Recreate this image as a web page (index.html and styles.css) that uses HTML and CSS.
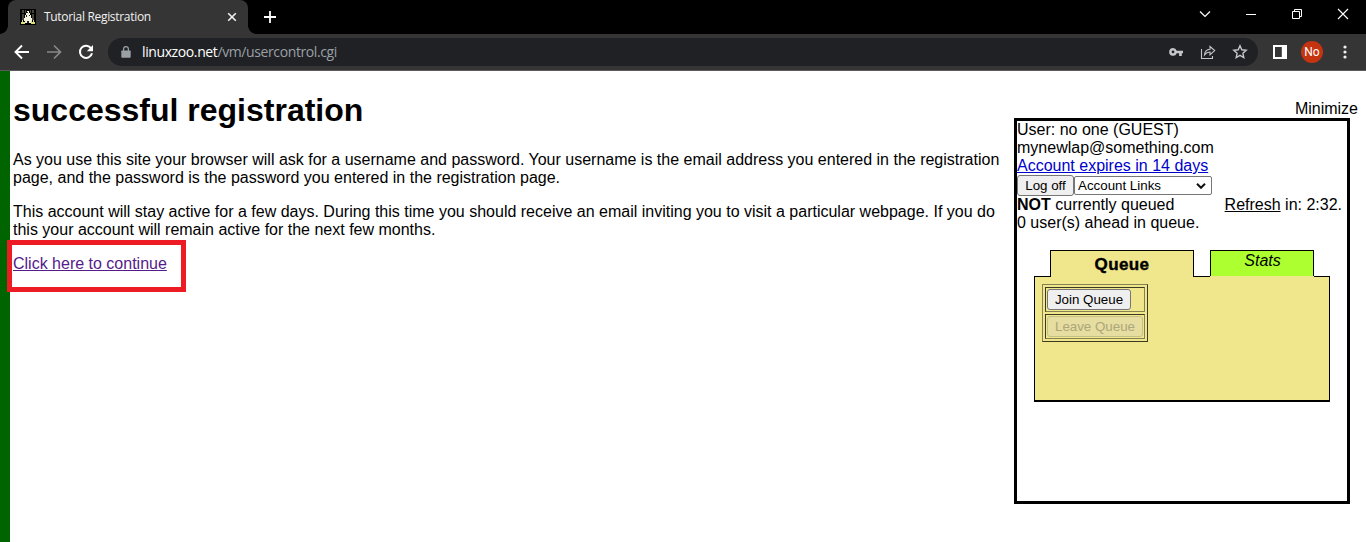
FILE: index.html
```html
<!DOCTYPE html>
<html lang="en">
<head>
<meta charset="utf-8">
<title>Tutorial Registration</title>
<link rel="stylesheet" href="styles.css">
</head>
<body>
<header class="browser">
  <div class="titlebar">
    <div class="tab">
      <svg class="favicon" width="16" height="16" viewBox="0 0 16 16"><path fill="#000" d="M0 0h16v16H0z"/><path fill="#45453a" d="M2 1h2v3H2zM2 5h2v6H2zM5 1h1v3H5zM10 1h1v3h-1zM12 1h2v3h-2zM12 5h2v6h-2z"/><path fill="#f4f4e0" d="M7 2h2v2h1v2h1v3h1v3h-1v2H5v-2H4V9h1V6h1V4h1z"/><path fill="#222" d="M7 3h1v1H7zM6 6h1v2H6zM9 6h1v1H9zM7 12h2v2H7z"/><path fill="#dede7a" d="M2 11h1v2h2v2H1v-2h1zM11 12h1v1h1v-2h1v2h1v2h-4zM8 4h1v1H8z"/></svg>
      <span class="tab-title">Tutorial Registration</span>
      <svg class="tab-close" width="10" height="10" viewBox="0 0 10 10"><path d="M1.2 1.2l7.6 7.6M8.800 1.2L1.2 8.800" stroke="#f1f1f1" stroke-width="1.6"/></svg>
    </div>
    <svg class="new-tab" width="12" height="12" viewBox="0 0 12 12"><path d="M6 0v12M0 6h12" stroke="#fff" stroke-width="1.8"/></svg>
    <div class="window-controls">
      <svg width="12" height="12" viewBox="0 0 12 12"><path d="M1 3.500l5 5 5-5" fill="none" stroke="#fff" stroke-width="1.200"/></svg>
      <svg width="12" height="12" viewBox="0 0 12 12"><path d="M1 6.500h10" stroke="#fff"/></svg>
      <svg width="12" height="12" viewBox="0 0 12 12"><path d="M1.500 3.500h7v7h-7zM3.500 3.500v-2h7v7h-2" fill="none" stroke="#fff"/></svg>
      <svg width="12" height="12" viewBox="0 0 12 12"><path d="M1 1l10 10M11 1L1 11" stroke="#fff" stroke-width="1.100"/></svg>
    </div>
  </div>
  <div class="toolbar">
    <nav class="nav">
      <svg width="16" height="16" viewBox="0 0 16 16"><path d="M15 8H2M8 1.500L1.500 8 8 14.500" fill="none" stroke="#fff" stroke-width="1.900"/></svg>
      <svg width="16" height="16" viewBox="0 0 16 16"><path d="M1 8h13M8 1.500L14.500 8 8 14.500" fill="none" stroke="#87888a" stroke-width="1.700"/></svg>
      <svg width="16" height="16" viewBox="0 0 16 16"><path d="M13.200 4.500A6.100 6.100 0 1 0 14 9.200" fill="none" stroke="#fff" stroke-width="2"/><path d="M15 1v6.200H8.800z" fill="#fff"/></svg>
    </nav>
    <div class="omnibox">
      <svg class="lock" width="10" height="12" viewBox="0 0 10 12"><path d="M1 4.500h8q.7 0 .7.700v5.600q0 .9-.9.900H1.200q-.9 0-.9-.9V5.200q0-.7.700-.7z" fill="#9aa0a6"/><path d="M2.600 5V3a2.400 2.400 0 0 1 4.800 0v2" fill="none" stroke="#9aa0a6" stroke-width="1.300"/></svg>
      <span class="url"><span class="host">linuxzoo.net</span>/vm/usercontrol.cgi</span>
      <div class="actions">
        <svg width="16" height="16" viewBox="0 0 16 16"><path fill="#c4c7c9" fill-rule="evenodd" d="M5 4a3.900 3.900 0 0 1 3.700 2.700H15v2.600h-1.200V12h-2.700V9.300H8.700A3.900 3.900 0 1 1 5 4zm0 2.500a1.400 1.400 0 1 0 0 2.800 1.400 1.400 0 0 0 0-2.800z"/></svg>
        <svg width="16" height="16" viewBox="0 0 16 16"><path d="M1.500 5v9.500h11V12M4.500 11c.3-3.500 2-5.500 5.500-5.700V2.500L14.700 6.600 10 10.700V8C7.500 7.900 6 9 4.500 11z" fill="none" stroke="#c4c7c9" stroke-width="1.100"/></svg>
        <svg width="16" height="16" viewBox="0 0 16 16"><path d="M8 1.800l1.800 4 4.400.5-3.300 3 .9 4.300L8 11.400l-3.800 2.200.9-4.300-3.300-3 4.400-.5z" fill="none" stroke="#c4c7c9" stroke-width="1.400"/></svg>
      </div>
    </div>
    <svg class="side-panel" width="14" height="14" viewBox="0 0 14 14"><path d="M0 0h14v14H0zM2 2v10h6.800V2z" fill="#fff" fill-rule="evenodd"/></svg>
    <span class="avatar">No</span>
    <svg class="more" width="4" height="14" viewBox="0 0 4 14"><g fill="#f1f1f1"><circle cx="2" cy="2" r="1.600"/><circle cx="2" cy="7" r="1.600"/><circle cx="2" cy="12" r="1.600"/></g></svg>
  </div>
</header>
<div class="page">
  <main class="content">
    <h1>successful registration</h1>
    <p>As you use this site your browser will ask for a username and password. Your username is the email address you entered in the registration page, and the password is the password you entered in the registration page.</p>
    <p>This account will stay active for a few days. During this time you should receive an email inviting you to visit a particular webpage. If you do this your account will remain active for the next few months.</p>
    <p class="continue"><a href="#" class="visited">Click here to continue</a><span class="highlight"></span></p>
  </main>
  <aside class="sidebar">
    <div class="minimize">Minimize</div>
    <section class="panel">
      <div>User: no one (GUEST)</div>
      <div>mynewlap@something.com</div>
      <div><a href="#" class="expires">Account expires in 14 days</a></div>
      <div class="controls"><button class="btn logoff">Log off</button><div class="select"><span>Account Links</span><svg width="10" height="6" viewBox="0 0 10 6"><path d="M1 .8l4 4 4-4" fill="none" stroke="#111" stroke-width="2"/></svg></div></div>
      <div class="status"><span><b>NOT</b> currently queued</span><span><u>Refresh</u> in: 2:32.</span></div>
      <div>0 user(s) ahead in queue.</div>
      <div class="tabs">
        <div class="gap"></div>
        <div class="card-tab queue">Queue</div>
        <div class="gap"></div>
        <div class="card-tab stats">Stats</div>
        <div class="gap"></div>
      </div>
      <div class="card">
        <div class="grid">
          <div class="cell"><button class="btn join">Join Queue</button></div>
          <div class="cell"><button class="btn leave" disabled>Leave Queue</button></div>
        </div>
      </div>
    </section>
  </aside>
</div>
</body>
</html>
```
FILE: styles.css
```css
* { box-sizing: border-box; }
body { margin: 0; height: 542px; overflow: hidden; background: #fff; color: #000; font: 16px/18px "Liberation Sans", Arial, sans-serif; }
svg { display: block; flex: none; }

/* Browser frame */
.browser { height: 71px; font-family: "Open Sans", "Noto Sans", sans-serif; }
.titlebar { height: 34px; padding-left: 8px; background: #000; display: flex; align-items: center; }
.tab { position: relative; width: 240px; height: 34px; padding: 0 11px 0 12px; display: flex; align-items: center; background: #353535; border-radius: 8px 8px 0 0; }
.tab::before, .tab::after { content: ""; position: absolute; bottom: 0; width: 8px; height: 8px; }
.tab::before { left: -8px; background: radial-gradient(circle at 0 0, #000 7.500px, #353535 8px); }
.tab::after { right: -8px; background: radial-gradient(circle at 100% 0, #000 7.500px, #353535 8px); }
.tab-title { margin-left: 8px; color: #f1f1f1; font-size: 12px; letter-spacing: -.31px; white-space: nowrap; }
.tab-close { margin-left: auto; }
.new-tab { margin-left: 16px; }
.window-controls { margin-left: auto; margin-right: 17px; padding-bottom: 6px; display: flex; gap: 34px; }
.toolbar { height: 37px; padding: 0 19px 0 14px; display: flex; align-items: center; background: #353535; border-bottom: 1px solid #5b5b5b; }
.nav { display: flex; gap: 16px; }
.omnibox { width: 1150px; height: 28px; margin-left: 14px; padding: 0 10px 0 13px; display: flex; align-items: center; border-radius: 14px; background: #202124; }
.url { margin-left: 11px; color: #9aa0a6; font-size: 14px; letter-spacing: -.39px; white-space: nowrap; }
.host { color: #fff; }
.actions { margin-left: auto; display: flex; gap: 16px; }
.side-panel { margin-left: 15px; }
.avatar { width: 22px; height: 22px; margin-left: 14px; border-radius: 50%; background: #c53410; color: #fff; font: 12px/22px Roboto, sans-serif; text-align: center; }
.more { margin-left: auto; }

/* Page */
.page { height: 471px; border-left: 10px solid #006400; padding-left: 3px; display: flex; }
.content { width: 994px; }
h1 { margin: 21px 0 22px; font-size: 32px; line-height: 37px; }
p { margin: 0 0 16px; }
.continue { position: relative; }
.visited { color: #551a8b; }
.highlight { position: absolute; left: -6px; top: -15px; width: 179px; height: 52px; border: 5px solid #ed1c24; }
.sidebar { width: 351px; padding: 29px 0 0 7px; }
.minimize { text-align: right; }
.panel { width: 336px; height: 386px; border: 3px solid #000; }
.expires { color: #00c; }
.controls { height: 21px; display: flex; align-items: flex-start; }
.btn { height: 21px; padding: 0; border: 1px solid #767676; border-radius: 3px; background: #efefef; color: #000; font: 13.333px/17px "Liberation Sans", Arial, sans-serif; display: block; }
.logoff { width: 57px; }
.select { width: 138px; height: 19px; margin-top: 1px; padding: 0 5px 0 3px; display: flex; align-items: center; justify-content: space-between; border: 1px solid #767676; border-radius: 2px; font-size: 13.333px; line-height: 17px; }
.status { display: flex; justify-content: space-between; padding-right: 5px; }
.tabs { display: flex; margin: 18px 17px 0; height: 26px; }
.gap { width: 16px; border-bottom: 1px solid #000; margin-bottom: -1px; }
.card-tab { border: 1px solid #000; border-bottom: 0; text-align: center; }
.queue { width: 144px; margin-bottom: -1px; padding-top: 5px; background: #f0e68c; font-weight: bold; font-size: 17px; letter-spacing: .4px; -webkit-text-stroke: .4px #000; }
.stats { width: 104px; padding: 1px 0 0 1px; background: #adff2f; font-style: italic; }
.card { height: 126px; margin: 0 17px; padding: 8px 7px; border: 1px solid #000; border-top: 0; border-bottom-width: 2px; background: #f0e68c; }
.grid { width: 106px; height: 58px; padding: 2px; display: grid; gap: 2px; border: 1px solid; border-color: #858052 #3c3923 #3c3923 #858052; }
.cell { padding: 1px; border: 1px solid; border-color: #3c3923 #858052 #858052 #3c3923; }
.join { width: 84px; }
.leave { width: 96px; background: #e6dda0; border-color: #c6bf86; color: #aca67a; }
```
